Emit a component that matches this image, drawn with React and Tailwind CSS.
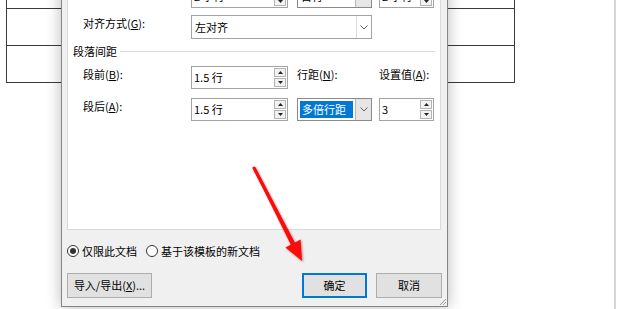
function UpTri() {
  return (
    <svg width="5" height="3" viewBox="0 0 5 3"><path d="M0 3 L2.5 0 L5 3 Z" fill="#222" /></svg>
  );
}
function DownTri() {
  return (
    <svg width="5" height="3" viewBox="0 0 5 3"><path d="M0 0 L2.5 3 L5 0 Z" fill="#222" /></svg>
  );
}
function Chevron() {
  return (
    <svg width="8" height="5" viewBox="0 0 8 5"><path d="M0.5 0.5 L4 4 L7.5 0.5" fill="none" stroke="#606060" strokeWidth="1" /></svg>
  );
}

function Spinner({ value, className }) {
  return (
    <div className={`flex h-[23px] shrink-0 border border-[#a3a3a3] bg-white ${className}`}>
      <div className="flex flex-1 items-center pl-[2px] leading-none">{value}</div>
      <div className="my-[1px] mr-[1px] flex w-[12px] flex-col gap-[1px]">
        <div className="flex flex-1 items-center justify-center border border-[#b4b4b4] bg-[#f2f2f2]">
          <UpTri />
        </div>
        <div className="flex flex-1 items-center justify-center border border-[#b4b4b4] bg-[#f2f2f2]">
          <DownTri />
        </div>
      </div>
    </div>
  );
}

function ListCombo({ value, selected, className }) {
  return (
    <div className={`flex h-[23px] shrink-0 border border-[#8a8a8a] bg-white ${className}`}>
      {selected ? (
        <div className="m-[2px] flex flex-1 items-center bg-[#0078d7] pl-[2px] text-white">{value}</div>
      ) : (
        <div className="flex flex-1 items-center pl-[3px]">{value}</div>
      )}
      <div className="flex w-[16px] items-center justify-center border-l border-[#b9b9b9] bg-[#e6e6e6]">
        <Chevron />
      </div>
    </div>
  );
}

export default function App() {
  return (
    <div className="relative h-[309px] w-[620px] overflow-hidden bg-white font-['Noto_Sans_CJK_SC','Microsoft_YaHei',sans-serif] text-[11px] text-black">
      {/* document table behind the dialog */}
      <div className="absolute left-[6px] top-[-30px] w-[509px] border-x border-[#3a3a3a]">
        <div className="h-[39px] border-b border-[#3a3a3a]" />
        <div className="h-[37px] border-b border-[#3a3a3a]" />
        <div className="h-[37px] border-b border-[#3a3a3a]" />
      </div>
      {/* page edge */}
      <div className="absolute left-[614px] top-0 h-full w-[2px] bg-[#d6d6d6]" />

      {/* dialog window */}
      <div className="absolute left-[61px] top-[-24px] flex h-[331px] w-[387px] flex-col border border-[#858585] bg-[#f0f0f0] pl-[5px] pr-[6px] pt-[3px] shadow-[0_0_14px_rgba(0,0,0,0.28)]">
        {/* tab page */}
        <div className="flex h-[250px] shrink-0 flex-col border border-[#d9d9d9] bg-white pt-[4px]">
          {/* partial first row */}
          <div className="flex h-[23px] pl-[123px]">
            <Spinner value="2 字符" className="w-[97px]" />
            <ListCombo value="首行" className="ml-[9px] w-[75px]" />
            <Spinner value="2 字符" className="ml-[7px] w-[55px]" />
          </div>
          {/* alignment */}
          <div className="mt-[7px] flex h-[24px]">
            <div className="w-[123px] shrink-0 pl-[15px] leading-[16px]">
              对齐方式(<u>G</u>):
            </div>
            <div className="flex h-[24px] w-[181px] border border-[#a3a3a3] bg-white">
              <div className="flex flex-1 items-center pl-[3px]">左对齐</div>
              <div className="flex w-[15px] items-center justify-center border-l border-[#dcdcdc]">
                <Chevron />
              </div>
            </div>
          </div>
          {/* group header */}
          <div className="mt-[4px] flex h-[16px] items-center pl-[5px] pr-[5px]">
            <span className="leading-[16px]">段落间距</span>
            <div className="ml-[3px] h-px flex-1 bg-[#dcdcdc]" />
          </div>
          {/* before */}
          <div className="mt-[7px] flex h-[23px]">
            <div className="w-[123px] shrink-0 pl-[15px] leading-[16px]">
              段前(<u>B</u>):
            </div>
            <Spinner value="1.5 行" className="w-[97px]" />
            <div className="ml-[9px] w-[75px] shrink-0 leading-[16px]">
              行距(<u>N</u>):
            </div>
            <div className="ml-[7px] w-[60px] shrink-0 leading-[16px]">
              设置值(<u>A</u>):
            </div>
          </div>
          {/* after */}
          <div className="mt-[9px] flex h-[23px]">
            <div className="w-[123px] shrink-0 pl-[15px] leading-[16px]">
              段后(<u>A</u>):
            </div>
            <Spinner value="1.5 行" className="w-[97px]" />
            <ListCombo value="多倍行距" selected className="ml-[9px] w-[75px]" />
            <Spinner value="3" className="ml-[7px] w-[55px]" />
          </div>
        </div>

        {/* radio row */}
        <div className="mt-[13px] flex h-[16px] items-center">
          <div className="flex h-[12px] w-[12px] items-center justify-center rounded-full border border-[#333] bg-white">
            <div className="h-[6px] w-[6px] rounded-full bg-[#333]" />
          </div>
          <span className="ml-[3px] leading-[16px]">仅限此文档</span>
          <div className="ml-[9px] h-[12px] w-[12px] rounded-full border border-[#333] bg-white" />
          <span className="ml-[3px] leading-[16px]">基于该模板的新文档</span>
        </div>

        {/* buttons */}
        <div className="mr-[-1px] mt-[14px] flex h-[25px]">
          <div className="flex w-[85px] items-center justify-center border border-[#adadad] bg-[#e1e1e1]">
            导入/导出(<u>X</u>)...
          </div>
          <div className="ml-auto flex w-[65px] items-center justify-center border-2 border-[#0078d7] bg-[#e1e1e1]">
            确定
          </div>
          <div className="ml-[9px] flex w-[66px] items-center justify-center border border-[#adadad] bg-[#e1e1e1]">
            取消
          </div>
        </div>

        {/* resize grip */}
        <svg className="absolute bottom-0 right-0" width="8" height="8" viewBox="0 0 8 8">
          <path d="M7 1 L1 7 M7 4 L4 7" stroke="#9a9a9a" strokeWidth="1" />
        </svg>
      </div>

      {/* red annotation arrow */}
      <svg
        className="pointer-events-none absolute left-0 top-0 drop-shadow-[1px_1px_1px_rgba(110,0,0,0.45)]"
        width="620"
        height="309"
        viewBox="0 0 620 309"
      >
        <path d="M253.2 168.4 L255.4 167.4 L295.6 244 L291.4 246 Z" fill="#ff0a0a" />
        <line x1="254" y1="168" x2="294" y2="245" stroke="#ff0a0a" strokeWidth="3" strokeLinecap="round" />
        <path d="M302 261 L300.6 239.6 L285.4 247.4 Z" fill="#ff0a0a" />
      </svg>
    </div>
  );
}
